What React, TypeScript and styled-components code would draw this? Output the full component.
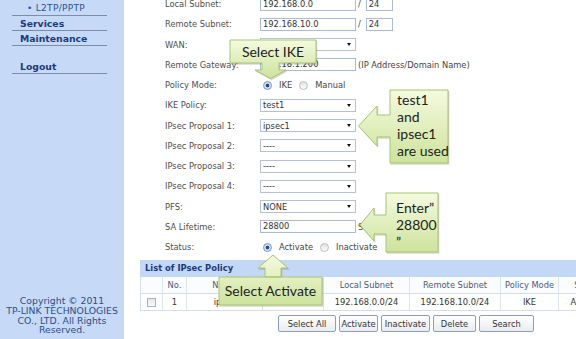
import React from 'react';
import styled, { createGlobalStyle } from 'styled-components';

const GlobalStyle = createGlobalStyle`
  html, body { margin: 0; padding: 0; background: #fff; }
  body {
    width: 576px; height: 339px; overflow: hidden;
    font-family: "DejaVu Sans", Verdana, sans-serif;
  }
`;

const Page = styled.div`
  position: relative;
  display: flex;
  width: 576px;
  height: 339px;
  overflow: hidden;
  background: #fff;
`;

const Sidebar = styled.aside`
  width: 124px;
  flex: none;
  background: #c6daf8;
  display: flex;
  flex-direction: column;
  justify-content: space-between;
`;

const Menu = styled.ul`
  list-style: none;
  margin: 0;
  padding: 1px 0 0 12px;
  width: 95px;
`;

const MenuItem = styled.li<{ $sub?: boolean; $gap?: boolean }>`
  height: 14px;
  line-height: 15px;
  border-bottom: 1px solid #7d8ca8;
  padding-left: ${p => (p.$sub ? 15 : 8)}px;
  margin-top: ${p => (p.$gap ? 13 : 0)}px;
  font-size: ${p => (p.$sub ? 9 : 9.3)}px;
  font-weight: ${p => (p.$sub ? 400 : 700)};
  letter-spacing: ${p => (p.$sub ? 0.3 : 0)}px;
  color: ${p => (p.$sub ? '#2c4f93' : '#1b3a78')};
  white-space: nowrap;
`;

const Copyright = styled.div`
  text-align: center;
  font-size: 9.3px;
  line-height: 9.7px;
  color: #2f4d85;
  padding-bottom: 4px;
  white-space: nowrap;
`;

const Main = styled.main`
  flex: 1;
  min-width: 0;
  overflow: hidden;
  display: flex;
  flex-direction: column;
`;

const Form = styled.div`
  display: grid;
  grid-template-columns: 95px auto;
  grid-auto-rows: 20.25px;
  align-items: center;
  margin-top: -6px;
  padding-left: 41px;
`;

const Label = styled.div`
  font-size: 8.3px;
  color: #4d4d4d;
  white-space: nowrap;
`;

const Field = styled.div`
  display: flex;
  align-items: center;
  font-size: 8.3px;
  color: #333;
  white-space: nowrap;
`;

const TextBox = styled.div<{ $w?: number }>`
  box-sizing: border-box;
  width: ${p => p.$w ?? 96}px;
  height: 13px;
  border: 1px solid #a9bbd6;
  background: #fff;
  padding-left: 2px;
  font-size: 8.3px;
  line-height: 11px;
  color: #333;
`;

const SelectBox = styled.div`
  box-sizing: border-box;
  width: 96px;
  height: 13px;
  border: 1px solid #b4c2d6;
  background: #fff;
  padding: 0 4px 0 2px;
  display: flex;
  align-items: center;
  justify-content: space-between;
  font-size: 8.3px;
  color: #333;
`;

const Caret = styled.span`
  width: 0;
  height: 0;
  border-left: 2.5px solid transparent;
  border-right: 2.5px solid transparent;
  border-top: 3px solid #111;
`;

const Sep = styled.span`
  margin: 0 5px 0 2px;
  color: #444;
`;

const Hint = styled.span`
  margin-left: 2px;
  color: #444;
`;

const RadioGroup = styled.div`
  display: flex;
  align-items: center;
  padding-left: 3px;
  font-size: 8.3px;
  color: #444;
`;

const Radio = styled.span<{ $on?: boolean }>`
  box-sizing: border-box;
  width: 9px;
  height: 9px;
  border-radius: 50%;
  border: 1px solid ${p => (p.$on ? '#7a97bd' : '#b8bec8')};
  background: ${p =>
    p.$on
      ? 'radial-gradient(circle, #2a4a80 0 1.6px, #cfe0f5 2.2px)'
      : 'linear-gradient(#e2e2e2, #fbfbfb)'};
  margin-right: 7px;
`;

const RadioText = styled.span`
  margin-right: 7px;
`;

const TableWrap = styled.section`
  margin: 3px 0 0 16px;
  width: 532px;
  flex: none;
`;

const TableTitle = styled.div`
  height: 17px;
  line-height: 17px;
  background: #c3d8f7;
  padding-left: 5px;
  font-size: 8.4px;
  font-weight: 700;
  color: #1b3a78;
`;

const Row = styled.div<{ $head?: boolean }>`
  display: grid;
  grid-template-columns: 22px 24px 76px 61px 86px 91px 58px 58px 56px;
  height: 16px;
  border-bottom: 1px solid #d4dde9;
  border-left: 1px solid #d4dde9;
  font-size: 8.3px;
  color: ${p => (p.$head ? '#4a5a78' : '#333')};
  background: ${p => (p.$head ? '#fbfcfe' : '#fff')};
`;

const Cell = styled.div`
  display: flex;
  align-items: center;
  justify-content: center;
  border-right: 1px solid #dde4ee;
  white-space: nowrap;
  overflow: hidden;
`;

const Check = styled.span`
  box-sizing: border-box;
  width: 9px;
  height: 9px;
  border: 1px solid #a9b1bd;
  background: linear-gradient(#e6e6e6, #fafafa);
`;

const ButtonBar = styled.div`
  display: flex;
  justify-content: center;
  gap: 3px;
  margin-top: 4px;
`;

const Button = styled.button<{ $w: number }>`
  box-sizing: border-box;
  width: ${p => p.$w}px;
  height: 17px;
  padding: 0;
  border: 1px solid #8d9fb9;
  border-radius: 2px;
  background: linear-gradient(#ffffff, #e9ecf0);
  font-family: "DejaVu Sans", Verdana, sans-serif;
  font-size: 8.3px;
  color: #333;
`;

const Overlay = styled.svg`
  position: absolute;
  left: 0;
  top: 0;
  width: 576px;
  height: 339px;
  pointer-events: none;
`;

const CalloutText = styled.div<{ $x: number; $y: number; $w: number; $center?: boolean }>`
  position: absolute;
  left: ${p => p.$x}px;
  top: ${p => p.$y}px;
  width: ${p => p.$w}px;
  font-family: Lato, "Open Sans", sans-serif;
  font-size: 14px;
  line-height: 17px;
  color: #222;
  text-align: ${p => (p.$center ? 'center' : 'left')};
  white-space: nowrap;
`;

const shapes = [
  'M230 40 H316 V63 H279 V70 H286 L270.5 78.5 L255 70 H262 V63 H230 Z',
  'M390 90 H448 V163 H390 V137 H377 V146 L358.5 126 L377 106 V115 H390 Z',
  'M386 193 H438 V252 H386 V234 H374 V241 L360 225 L374 208 V215 H386 Z',
  'M219 277 H322 V305 H219 Z M265 277 V268 H258 L273 255 L288 268 H281 V277 Z',
];

type Sel = { label: string; value: string };

export default function App() {
  const selects: Sel[] = [
    { label: 'IKE Policy:', value: 'test1' },
    { label: 'IPsec Proposal 1:', value: 'ipsec1' },
    { label: 'IPsec Proposal 2:', value: '----' },
    { label: 'IPsec Proposal 3:', value: '----' },
    { label: 'IPsec Proposal 4:', value: '----' },
    { label: 'PFS:', value: 'NONE' },
  ];
  return (
    <>
      <GlobalStyle />
      <Page>
        <Sidebar>
          <Menu>
            <MenuItem $sub>• L2TP/PPTP</MenuItem>
            <MenuItem>Services</MenuItem>
            <MenuItem>Maintenance</MenuItem>
            <MenuItem $gap>Logout</MenuItem>
          </Menu>
          <Copyright>
            Copyright © 2011
            <br />
            TP-LINK TECHNOLOGIES
            <br />
            CO., LTD. All Rights
            <br />
            Reserved.
          </Copyright>
        </Sidebar>
        <Main>
          <Form>
            <Label>Local Subnet:</Label>
            <Field>
              <TextBox>192.168.0.0</TextBox>
              <Sep>/</Sep>
              <TextBox $w={27}>24</TextBox>
            </Field>
            <Label>Remote Subnet:</Label>
            <Field>
              <TextBox>192.168.10.0</TextBox>
              <Sep>/</Sep>
              <TextBox $w={27}>24</TextBox>
            </Field>
            <Label>WAN:</Label>
            <Field>
              <SelectBox>
                WAN1
                <Caret />
              </SelectBox>
            </Field>
            <Label>Remote Gateway:</Label>
            <Field>
              <TextBox>218.18.1.200</TextBox>
              <Hint>(IP Address/Domain Name)</Hint>
            </Field>
            <Label>Policy Mode:</Label>
            <RadioGroup>
              <Radio $on />
              <RadioText>IKE</RadioText>
              <Radio />
              <RadioText>Manual</RadioText>
            </RadioGroup>
            {selects.map(s => (
              <React.Fragment key={s.label}>
                <Label>{s.label}</Label>
                <Field>
                  <SelectBox>
                    {s.value}
                    <Caret />
                  </SelectBox>
                </Field>
              </React.Fragment>
            ))}
            <Label>SA Lifetime:</Label>
            <Field>
              <TextBox>28800</TextBox>
              <Hint>Seconds</Hint>
            </Field>
            <Label>Status:</Label>
            <RadioGroup>
              <Radio $on />
              <RadioText>Activate</RadioText>
              <Radio />
              <RadioText>Inactivate</RadioText>
            </RadioGroup>
          </Form>
          <TableWrap>
            <TableTitle>List of IPsec Policy</TableTitle>
            <Row $head>
              <Cell />
              <Cell>No.</Cell>
              <Cell>Name</Cell>
              <Cell>IKE Policy</Cell>
              <Cell>Local Subnet</Cell>
              <Cell>Remote Subnet</Cell>
              <Cell>Policy Mode</Cell>
              <Cell>Status</Cell>
              <Cell>Edit</Cell>
            </Row>
            <Row>
              <Cell>
                <Check />
              </Cell>
              <Cell>1</Cell>
              <Cell>ipsec</Cell>
              <Cell>test1</Cell>
              <Cell>192.168.0.0/24</Cell>
              <Cell>192.168.10.0/24</Cell>
              <Cell>IKE</Cell>
              <Cell>Activate</Cell>
              <Cell>Edit</Cell>
            </Row>
            <ButtonBar>
              <Button $w={58}>Select All</Button>
              <Button $w={39}>Activate</Button>
              <Button $w={49}>Inactivate</Button>
              <Button $w={43}>Delete</Button>
              <Button $w={55}>Search</Button>
            </ButtonBar>
          </TableWrap>
        </Main>
        <Overlay viewBox="0 0 576 339">
          <defs>
            <linearGradient id="callout" x1="0" y1="0" x2="0" y2="1">
              <stop offset="0" stopColor="#f5fadf" />
              <stop offset="1" stopColor="#cde39c" />
            </linearGradient>
          </defs>
          {shapes.map((d, i) => (
            <g key={i}>
              <path d={d} transform="translate(1 1.3)" fill="rgba(0,0,0,0.14)" stroke="rgba(0,0,0,0.08)" strokeWidth="1.2" />
              <path
                d={d}
                fill="url(#callout)"
                stroke="#a9c56f"
                strokeWidth="1"
                strokeLinejoin="round"
              />
            </g>
          ))}
        </Overlay>
        <CalloutText $x={230} $y={43} $w={86} $center>
          Select IKE
        </CalloutText>
        <CalloutText $x={397} $y={91} $w={50}>
          test1
          <br />
          and
          <br />
          ipsec1
          <br />
          are used
        </CalloutText>
        <CalloutText $x={396} $y={199} $w={42}>
          Enter”
          <br />
          28800
          <br />”
        </CalloutText>
        <CalloutText $x={219} $y={282} $w={103} $center>
          Select Activate
        </CalloutText>
      </Page>
    </>
  );
}
